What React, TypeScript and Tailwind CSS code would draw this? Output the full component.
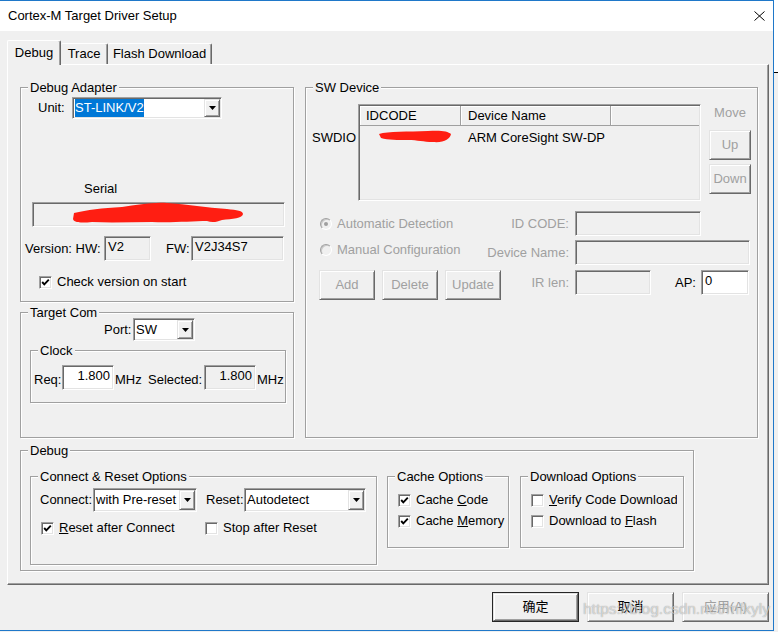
import React from "react";

const SUNKEN =
  "border border-t-[#a0a0a0] border-l-[#a0a0a0] border-r-white border-b-white shadow-[inset_1px_1px_0_#696969,inset_-1px_-1px_0_#e3e3e3]";
const RAISED =
  "border border-t-[#e3e3e3] border-l-[#e3e3e3] border-r-[#696969] border-b-[#696969] shadow-[inset_1px_1px_0_#ffffff,inset_-1px_-1px_0_#a0a0a0]";
const ETCHED = "border border-[#a0a0a0] shadow-[1px_1px_0_#ffffff,inset_1px_1px_0_#ffffff]";
const DIS = "text-[#a0a0a0]";

type P = { className?: string; children?: React.ReactNode };

function Group({ title, className = "", children }: P & { title: string }) {
  return (
    <div className={`relative shrink-0 ${ETCHED} ${className}`}>
      <div className="absolute -top-[8px] left-[7px] px-[2px] bg-[#f0f0f0] leading-[16px] whitespace-nowrap">
        {title}
      </div>
      {children}
    </div>
  );
}

function Combo({ className = "", children }: P) {
  return (
    <div className={`${SUNKEN} bg-white p-[1px] flex shrink-0 ${className}`}>
      <div className="flex-1 flex items-center pl-[1px] whitespace-nowrap overflow-hidden">{children}</div>
      <div className={`w-[16px] ${RAISED} bg-[#f0f0f0] flex items-center justify-center`}>
        <svg width="7" height="4" viewBox="0 0 7 4">
          <path d="M0 0H7L3.5 4Z" fill="#000" />
        </svg>
      </div>
    </div>
  );
}

function Edit({ className = "", white = false, children }: P & { white?: boolean }) {
  return (
    <div
      className={`${SUNKEN} ${white ? "bg-white" : "bg-[#f0f0f0]"} pl-[3px] pt-[2px] whitespace-nowrap overflow-hidden shrink-0 ${className}`}
    >
      {children}
    </div>
  );
}

function Btn({ className = "", disabled = false, children }: P & { disabled?: boolean }) {
  return (
    <div
      className={`${RAISED} bg-[#f0f0f0] flex items-center justify-center shrink-0 ${disabled ? DIS : ""} ${className}`}
    >
      {children}
    </div>
  );
}

function Check({ checked = false }: { checked?: boolean }) {
  return (
    <div className={`w-[13px] h-[13px] ${SUNKEN} bg-white shrink-0 flex items-center justify-center`}>
      {checked && (
        <svg width="9" height="9" viewBox="0 0 9 9">
          <polyline points="1.2,4 3.3,6.3 7.8,1.6" stroke="#000" strokeWidth="1.9" fill="none" />
        </svg>
      )}
    </div>
  );
}

function Radio({ checked = false }: { checked?: boolean }) {
  return (
    <div className="w-[12px] h-[12px] rounded-full border border-t-[#a0a0a0] border-l-[#a0a0a0] border-b-white border-r-white bg-[#f0f0f0] shadow-[inset_1px_1px_0_#c8c8c8] flex items-center justify-center shrink-0">
      {checked && <div className="w-[4px] h-[4px] rounded-full bg-[#a0a0a0]" />}
    </div>
  );
}

export default function App() {
  return (
    <div className="w-[778px] h-[632px] flex bg-[#f0f0f0] overflow-hidden text-[13px] leading-[16px] text-black font-['Liberation_Sans','Noto_Sans_CJK_SC',sans-serif] relative">
      <div className="w-[774px] h-[631px] shrink-0 border-t border-r border-b border-[#1f78c9] flex flex-col">
        {/* Title bar */}
        <div className="h-[30px] bg-white flex items-center pl-[8px] pr-[8px] shrink-0">
          <span>Cortex-M Target Driver Setup</span>
          <svg className="ml-auto" width="11" height="10" viewBox="0 0 11 10">
            <path d="M0.5 0.5 L10.5 9.5 M10.5 0.5 L0.5 9.5" stroke="#000" strokeWidth="1" />
          </svg>
        </div>

        {/* Tabs */}
        <div className="mt-[9px] ml-[7px] h-[24px] flex items-end relative z-10 shrink-0">
          <div className="w-[54px] h-[25px] -mb-px bg-[#f0f0f0] border-t border-l border-r border-t-white border-l-white border-r-[#696969] shadow-[inset_-1px_0_0_#a0a0a0] rounded-t-[2px] flex items-center justify-center">
            Debug
          </div>
          <div className="w-[47px] h-[21px] border-t border-r border-t-white border-r-[#696969] shadow-[inset_-1px_0_0_#a0a0a0] rounded-t-[2px] flex items-center justify-center">
            Trace
          </div>
          <div className="w-[104px] h-[21px] border-t border-r border-t-white border-r-[#696969] shadow-[inset_-1px_0_0_#a0a0a0] rounded-t-[2px] flex items-center justify-center">
            Flash Download
          </div>
        </div>

        {/* Tab panel */}
        <div className="ml-[7px] w-[762px] h-[521px] shrink-0 border border-t-white border-l-white border-r-[#696969] border-b-[#696969] shadow-[inset_-1px_-1px_0_#a0a0a0] pl-[12px] pt-[22px]">
          <div className="flex gap-[11px]">
            <div className="w-[274px] flex flex-col gap-[10px] shrink-0">
              {/* Debug Adapter */}
              <Group title="Debug Adapter" className="h-[215px]">
                <div className="mt-[9px] pl-[17px] flex items-center">
                  <div className="w-[34px]">Unit:</div>
                  <Combo className="w-[150px] h-[22px]">
                    <span className="block bg-[#0078d7] text-white leading-[18px]">ST-LINK/V2</span>
                  </Combo>
                </div>
                <div className="mt-[62px] pl-[63px]">Serial</div>
                <div className={`mt-[5px] ml-[11px] w-[253px] h-[25px] ${SUNKEN} relative`}>
                  <svg
                    className="absolute -left-px -top-px overflow-visible"
                    width="253"
                    height="25"
                    viewBox="0 0 253 25"
                  >
                    <path
                      d="M42,11 C55,8 70,6 90,5 C105,3 120,0 135,1 C155,2 175,6 195,7 C205,8 211,9 211,12 C211,16 200,17 190,18 C185,20 180,21 175,19 C160,19 140,21 120,20 C100,20 80,21 60,20 C50,21 42,21 41,17 Z"
                      fill="#ff1e12"
                    />
                  </svg>
                </div>
                <div className="mt-[9px] pl-[4px] flex items-center h-[25px]">
                  <div className="w-[79px]">Version: HW:</div>
                  <Edit className="w-[47px] h-[25px]">V2</Edit>
                  <div className="ml-[15px] w-[25px]">FW:</div>
                  <Edit className="w-[93px] h-[25px]">V2J34S7</Edit>
                </div>
                <div className="mt-[13px] pl-[18px] flex items-center h-[16px]">
                  <Check checked />
                  <span className="ml-[5px]">Check version on start</span>
                </div>
              </Group>

              {/* Target Com */}
              <Group title="Target Com" className="h-[126px]">
                <div className="mt-[5px] pl-[83px] flex items-center h-[23px]">
                  <div className="w-[29px]">Port:</div>
                  <Combo className="w-[62px] h-[23px]">SW</Combo>
                </div>
                <Group title="Clock" className="mt-[9px] ml-[9px] w-[256px] h-[53px]">
                  <div className="mt-[14px] pl-[3px] flex items-center h-[25px]">
                    <div className="w-[28px] pt-[5px]">Req:</div>
                    <Edit white className="w-[52px] h-[25px] text-right pr-[3px]">
                      1.800
                    </Edit>
                    <div className="w-[34px] pl-[1px] pt-[5px]">MHz</div>
                    <div className="w-[56px] pt-[5px]">Selected:</div>
                    <Edit className="w-[52px] h-[25px] text-right pr-[3px]">1.800</Edit>
                    <div className="pl-[1px] pt-[5px]">MHz</div>
                  </div>
                </Group>
              </Group>
            </div>

            {/* SW Device */}
            <Group title="SW Device" className="w-[453px] h-[351px]">
              <div className="mt-[16px] flex items-start">
                <div className="w-[52px] pl-[6px] mt-[26px] shrink-0">SWDIO</div>
                <div className={`w-[343px] h-[97px] ${SUNKEN} p-[1px] bg-[#f0f0f0] shrink-0`}>
                  <div className="flex h-[20px] border-b border-[#a0a0a0]">
                    <div className="w-[101px] pl-[6px] flex items-center border-r border-[#a0a0a0] shadow-[inset_1px_1px_0_#ffffff]">
                      IDCODE
                    </div>
                    <div className="w-[150px] pl-[7px] flex items-center border-r border-[#a0a0a0] shadow-[inset_1px_1px_0_#ffffff]">
                      Device Name
                    </div>
                    <div className="flex-1 shadow-[inset_1px_1px_0_#ffffff]" />
                  </div>
                  <div className="flex mt-[4px] h-[16px]">
                    <div className="w-[101px] relative shrink-0">
                      <svg className="absolute left-[18px] top-0" width="74" height="14" viewBox="0 0 74 14">
                        <path
                          d="M1,4 C10,1 30,2 50,1 C62,0 70,1 73,4 C72,9 66,13 55,12 C45,12 40,10 30,10 C20,10 10,10 3,8 Z"
                          fill="#ff1e12"
                        />
                      </svg>
                    </div>
                    <div className="pl-[7px] whitespace-nowrap">ARM CoreSight SW-DP</div>
                  </div>
                </div>
                <div className="ml-[8px] w-[42px] flex flex-col shrink-0">
                  <div className={`mt-[1px] text-center ${DIS}`}>Move</div>
                  <Btn disabled className="mt-[9px] w-[42px] h-[30px]">
                    Up
                  </Btn>
                  <Btn disabled className="mt-[4px] w-[42px] h-[30px]">
                    Down
                  </Btn>
                </div>
              </div>

              <div className="mt-[10px] flex items-center h-[25px]">
                <div className="w-[200px] pl-[14px] flex items-center shrink-0">
                  <Radio checked />
                  <span className={`ml-[5px] ${DIS}`}>Automatic Detection</span>
                </div>
                <div className={`w-[63px] flex justify-end whitespace-nowrap shrink-0 ${DIS}`}>
                  <span className="shrink-0">ID CODE:</span>
                </div>
                <Edit className="ml-[6px] w-[126px] h-[25px]" />
              </div>

              <div className="mt-[4px] flex items-center h-[25px]">
                <div className="w-[200px] pl-[14px] pb-[6px] flex items-center shrink-0">
                  <Radio />
                  <span className={`ml-[5px] ${DIS}`}>Manual Configuration</span>
                </div>
                <div className={`w-[63px] pt-[1px] flex justify-end whitespace-nowrap shrink-0 ${DIS}`}>
                  <span className="shrink-0">Device Name:</span>
                </div>
                <Edit className="ml-[6px] w-[175px] h-[25px]" />
              </div>

              <div className="mt-[5px] flex items-start">
                <div className="w-[200px] pl-[13px] flex gap-[7px] shrink-0">
                  <Btn disabled className="w-[56px] h-[30px]">
                    Add
                  </Btn>
                  <Btn disabled className="w-[56px] h-[30px]">
                    Delete
                  </Btn>
                  <Btn disabled className="w-[56px] h-[30px]">
                    Update
                  </Btn>
                </div>
                <div className={`w-[63px] h-[25px] flex items-center justify-end shrink-0 ${DIS}`}>IR len:</div>
                <Edit className="ml-[6px] w-[76px] h-[25px]" />
                <div className="ml-[24px] w-[26px] h-[25px] flex items-center">AP:</div>
                <Edit white className="w-[48px] h-[25px]">
                  0
                </Edit>
              </div>
            </Group>
          </div>

          {/* Debug */}
          <Group title="Debug" className="mt-[12px] w-[674px] h-[121px]">
            <div className="mt-[25px] pl-[9px] flex items-start">
              <Group title="Connect & Reset Options" className="w-[347px] h-[89px]">
                <div className="mt-[11px] pl-[9px] flex items-center h-[24px]">
                  <div className="w-[53px]">Connect:</div>
                  <Combo className="w-[104px] h-[24px]">with Pre-reset</Combo>
                  <div className="ml-[9px] w-[38px]">Reset:</div>
                  <Combo className="w-[122px] h-[24px]">Autodetect</Combo>
                </div>
                <div className="mt-[8px] pl-[10px] flex items-center h-[16px]">
                  <div className="w-[164px] flex items-center shrink-0">
                    <Check checked />
                    <span className="ml-[5px]">
                      <u>R</u>eset after Connect
                    </span>
                  </div>
                  <Check />
                  <span className="ml-[5px]">Stop after Reset</span>
                </div>
              </Group>

              <Group title="Cache Options" className="ml-[10px] w-[122px] h-[72px]">
                <div className="mt-[15px] pl-[10px] flex items-center h-[16px]">
                  <Check checked />
                  <span className="ml-[5px] whitespace-nowrap">
                    Cache <u>C</u>ode
                  </span>
                </div>
                <div className="mt-[5px] pl-[10px] flex items-center h-[16px]">
                  <Check checked />
                  <span className="ml-[5px] whitespace-nowrap">
                    Cache <u>M</u>emory
                  </span>
                </div>
              </Group>

              <Group title="Download Options" className="ml-[11px] w-[164px] h-[72px]">
                <div className="mt-[15px] pl-[10px] flex items-center h-[16px]">
                  <Check />
                  <span className="ml-[5px] w-[128px] overflow-hidden whitespace-nowrap">
                    <u>V</u>erify Code Download
                  </span>
                </div>
                <div className="mt-[5px] pl-[10px] flex items-center h-[16px]">
                  <Check />
                  <span className="ml-[5px] whitespace-nowrap">
                    Download to <u>F</u>lash
                  </span>
                </div>
              </Group>
            </div>
          </Group>
        </div>

        {/* Dialog buttons */}
        <div className="mt-[7px] flex justify-end gap-[8px] pr-[4px] shrink-0">
          <div className="w-[87px] h-[30px] border border-[#262626]">
            <div className={`w-full h-full ${RAISED} bg-[#f0f0f0] flex items-center justify-center`}>确定</div>
          </div>
          <Btn className="w-[87px] h-[30px]">取消</Btn>
          <Btn disabled className="w-[87px] h-[30px]">
            应用(A)
          </Btn>
        </div>
      </div>

      {/* outside strip */}
      <div className="flex-1 flex flex-col">
        <div className="h-[72px] bg-white" />
        <div className="flex-1 border-t border-black bg-[#f0f0f0]" />
      </div>

      {/* watermark */}
      <div className="absolute left-[583px] top-[599px] text-[15.5px] leading-[20px] whitespace-nowrap pointer-events-none text-[rgba(255,255,255,0.6)] [text-shadow:0_0_1px_rgba(0,0,0,0.45)]">
        https://blog.csdn.net/mfkyly
      </div>
    </div>
  );
}
